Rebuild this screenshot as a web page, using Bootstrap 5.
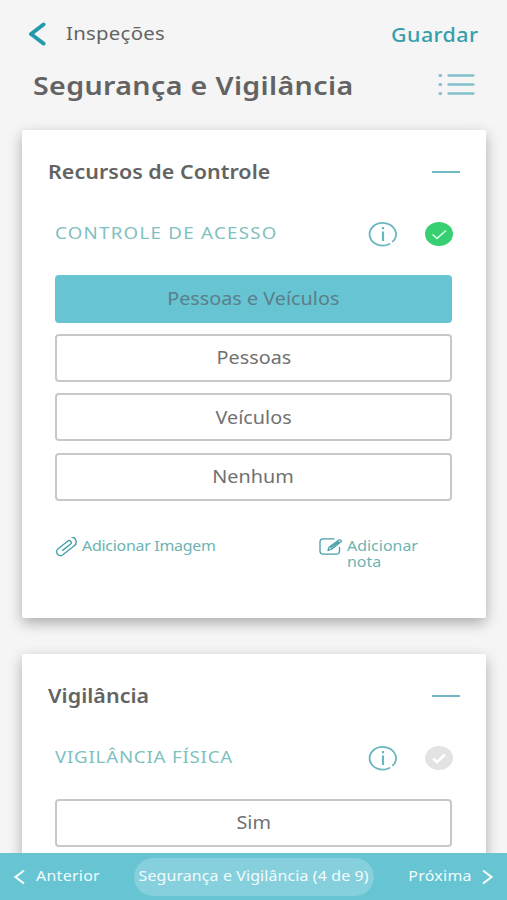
<!DOCTYPE html>
<html lang="pt">
<head>
<meta charset="utf-8">
<meta name="viewport" content="width=device-width, initial-scale=1">
<title>Inspeções</title>
<link href="https://cdn.jsdelivr.net/npm/bootstrap@5.3.0/dist/css/bootstrap.min.css" rel="stylesheet">
<style>
  :root { --teal: #67c4d2; --line: #6fb9c4; --ink: #636363; }
  body { background: #f5f5f5; font-family: "Noto Sans", "Open Sans", sans-serif; color: var(--ink); }
  .screen { height: 900px; overflow: hidden; }
  .wide { display: inline-block; white-space: nowrap; transform: scaleX(1.1); transform-origin: 0 50%; }
  .wide-c { transform-origin: 50% 50%; }
  .wide-r { transform-origin: 100% 50%; }
  .topbar { height: 67px; padding: 0 29px 0 28px; }
  .back-label { font-size: 18.5px; margin: -2px 0 0 20px; letter-spacing: .25px; }
  .save { font-size: 19.5px; font-weight: 500; color: #35a0ac; letter-spacing: .35px; padding-top: 2px; }
  .titlebar { height: 63px; padding: 0 31px 28px 33px; }
  .page-title { font-size: 26px; font-weight: 600; line-height: 34px; letter-spacing: .33px; }
  .panel { margin: 0 21px 36px 22px; height: 488px; border: 0; border-radius: 2px; box-shadow: 0 5px 14px rgba(0,0,0,.3); padding: 0 34px 0 33px; }
  .panel-head { height: 84px; margin: 0 -8px 0 -7px; }
  .panel-title { font-size: 19.5px; font-weight: 600; letter-spacing: .03px; }
  .dash { width: 28px; height: 2px; background: var(--line); }
  .question { height: 40px; margin: 0 -3px 20.500px 0; }
  .question-label { font-size: 17px; color: #7fc0c0; letter-spacing: 1.15px; margin-top: -2px; }
  .question-tight { letter-spacing: .7px; }
  .options { gap: 11.4px; }
  .option { height: 48px; padding: 0; border: 2px solid #c8c8c8; border-radius: 4px; color: #717171; font-size: 18px; background: #fff; }
  .option.chosen { background: var(--teal); border-color: var(--teal); color: #5b7f8a; }
  .extras { margin-top: 36.500px; font-size: 14.5px; line-height: 16px; color: #6db3b2; }
  .extra-image { margin-left: -2px; letter-spacing: -.25px; }
  .extra-note { width: 134px; }
  .footbar { height: 47px; background: var(--teal); color: #f1fcfd; font-size: 14.5px; padding: 0 13px; z-index: 5; }
  .foot-step { letter-spacing: .25px; margin-top: -2px; }
  .step-prev { margin-left: 11px; }
  .step-next { margin-right: 10px; }
  .pill { width: 240px; height: 38px; background: #86cfdc; letter-spacing: .1px; padding: 0 1px 2px 0; }
  svg { display: block; flex: none; }
</style>
</head>
<body>
<div class="screen">
  <header>
    <div class="topbar d-flex align-items-center justify-content-between">
      <div class="d-flex align-items-center">
        <svg width="18" height="24" viewBox="0 0 18 24" fill="none" stroke="#2499a9" stroke-width="4" stroke-linecap="round" stroke-linejoin="round"><path d="M15.500 2.500L3 12l12.500 9.500"/></svg>
        <span class="wide back-label">Inspeções</span>
      </div>
      <span class="wide wide-r save">Guardar</span>
    </div>
    <div class="titlebar d-flex align-items-center justify-content-between">
      <h1 class="wide page-title m-0">Segurança e Vigilância</h1>
      <svg width="38" height="24" viewBox="0 0 38 24" stroke="#83c1cb" stroke-width="2.300" stroke-linecap="round"><path d="M10.500 2.500h25M10.500 11.500h25M10.500 20.500h25"/><path d="M2 2.500h.6M2 11.500h.6M2 20.500h.6" stroke-width="3.200"/></svg>
    </div>
  </header>

  <main>
    <section class="card panel">
      <div class="panel-head d-flex align-items-center justify-content-between">
        <h2 class="wide panel-title m-0">Recursos de Controle</h2>
        <span class="dash"></span>
      </div>
      <div class="question d-flex align-items-center">
        <span class="wide question-label me-auto">CONTROLE DE ACESSO</span>
        <svg width="30" height="26" viewBox="0 0 30 26" fill="none" stroke="#6bb6be" stroke-width="1.800"><path d="M21.500 23A13.200 11.300 0 1 1 26.500 18.500L24.800 20.300" stroke-linecap="round"/><path d="M15 10.500v9.500M15 6v2.300" stroke-width="2.200"/></svg>
        <svg class="ms-4" width="33" height="26" viewBox="-2 0 33 26"><ellipse cx="15" cy="13" rx="14" ry="12" fill="#36cf71"/><path d="M8.500 13.500l4.500 4L22 9.500" fill="none" stroke="#dcffe8" stroke-width="1.600"/></svg>
      </div>
      <div class="options d-flex flex-column">
        <button class="btn option chosen"><span class="wide wide-c">Pessoas e Veículos</span></button>
        <button class="btn option"><span class="wide wide-c">Pessoas</span></button>
        <button class="btn option"><span class="wide wide-c">Veículos</span></button>
        <button class="btn option"><span class="wide wide-c">Nenhum</span></button>
      </div>
      <div class="extras d-flex justify-content-between align-items-start">
        <div class="d-flex extra-image">
          <svg class="me-1" width="25" height="20" viewBox="0 0 25 20" fill="none" stroke="#459fa8" stroke-width="1.400" stroke-linecap="round"><path transform="translate(12.500 9.800) rotate(-38)" d="M-4.500 1H5.500a2 2 0 0 0 0-4H-7a3.800 3.800 0 0 0 0 7.600H7.500a4.900 4.900 0 0 0 3.500-8.400"/></svg>
          <span class="wide">Adicionar Imagem</span>
        </div>
        <div class="d-flex extra-note">
          <svg class="me-1" width="25" height="20" viewBox="0 0 25 20" fill="none" stroke="#459fa8" stroke-width="1.300" stroke-linecap="round" stroke-linejoin="round"><path d="M16 1.800H5.500Q2 1.800 2 5v9q0 3.200 3.500 3.200h12.500q3.500 0 3.500-3.200v-3.500M10 13.500l1-3.200L20.500 3.200q2-1 3 1L13.500 12.200zM13 10.600l7.500-5.700"/></svg>
          <div class="d-flex flex-column align-items-start">
            <span class="wide">Adicionar</span>
            <span class="wide">nota</span>
          </div>
        </div>
      </div>
    </section>

    <section class="card panel">
      <div class="panel-head d-flex align-items-center justify-content-between">
        <h2 class="wide panel-title m-0">Vigilância</h2>
        <span class="dash"></span>
      </div>
      <div class="question d-flex align-items-center">
        <span class="wide question-label question-tight me-auto">VIGILÂNCIA FÍSICA</span>
        <svg width="30" height="26" viewBox="0 0 30 26" fill="none" stroke="#6bb6be" stroke-width="1.800"><path d="M21.500 23A13.200 11.300 0 1 1 26.500 18.500L24.800 20.300" stroke-linecap="round"/><path d="M15 10.500v9.500M15 6v2.300" stroke-width="2.200"/></svg>
        <svg class="ms-4" width="33" height="26" viewBox="-2 0 33 26"><ellipse cx="15" cy="13" rx="14" ry="12" fill="#e3e3e3"/><path d="M9 13.500l4 3.500L21 9.500" fill="none" stroke="#fff" stroke-width="2.600"/></svg>
      </div>
      <div class="options d-flex flex-column">
        <button class="btn option"><span class="wide wide-c">Sim</span></button>
      </div>
    </section>
  </main>

  <nav class="footbar fixed-bottom d-flex align-items-center justify-content-between">
    <div class="d-flex align-items-center">
      <svg width="12" height="16" viewBox="0 0 12 16" fill="none" stroke="#f1fcfd" stroke-width="2.200"><path d="M11 1.500L2.500 8l8.500 6.500"/></svg>
      <span class="wide foot-step step-prev">Anterior</span>
    </div>
    <div class="pill rounded-pill d-flex align-items-center justify-content-center"><span class="wide wide-c">Segurança e Vigilância (4 de 9)</span></div>
    <div class="d-flex align-items-center">
      <span class="wide wide-r foot-step step-next">Próxima</span>
      <svg width="12" height="16" viewBox="0 0 12 16" fill="none" stroke="#f1fcfd" stroke-width="2.200"><path d="M1 1.500L9.500 8 1 14.500"/></svg>
    </div>
  </nav>
</div>
<script src="https://cdn.jsdelivr.net/npm/bootstrap@5.3.0/dist/js/bootstrap.bundle.min.js"></script>
</body>
</html>
